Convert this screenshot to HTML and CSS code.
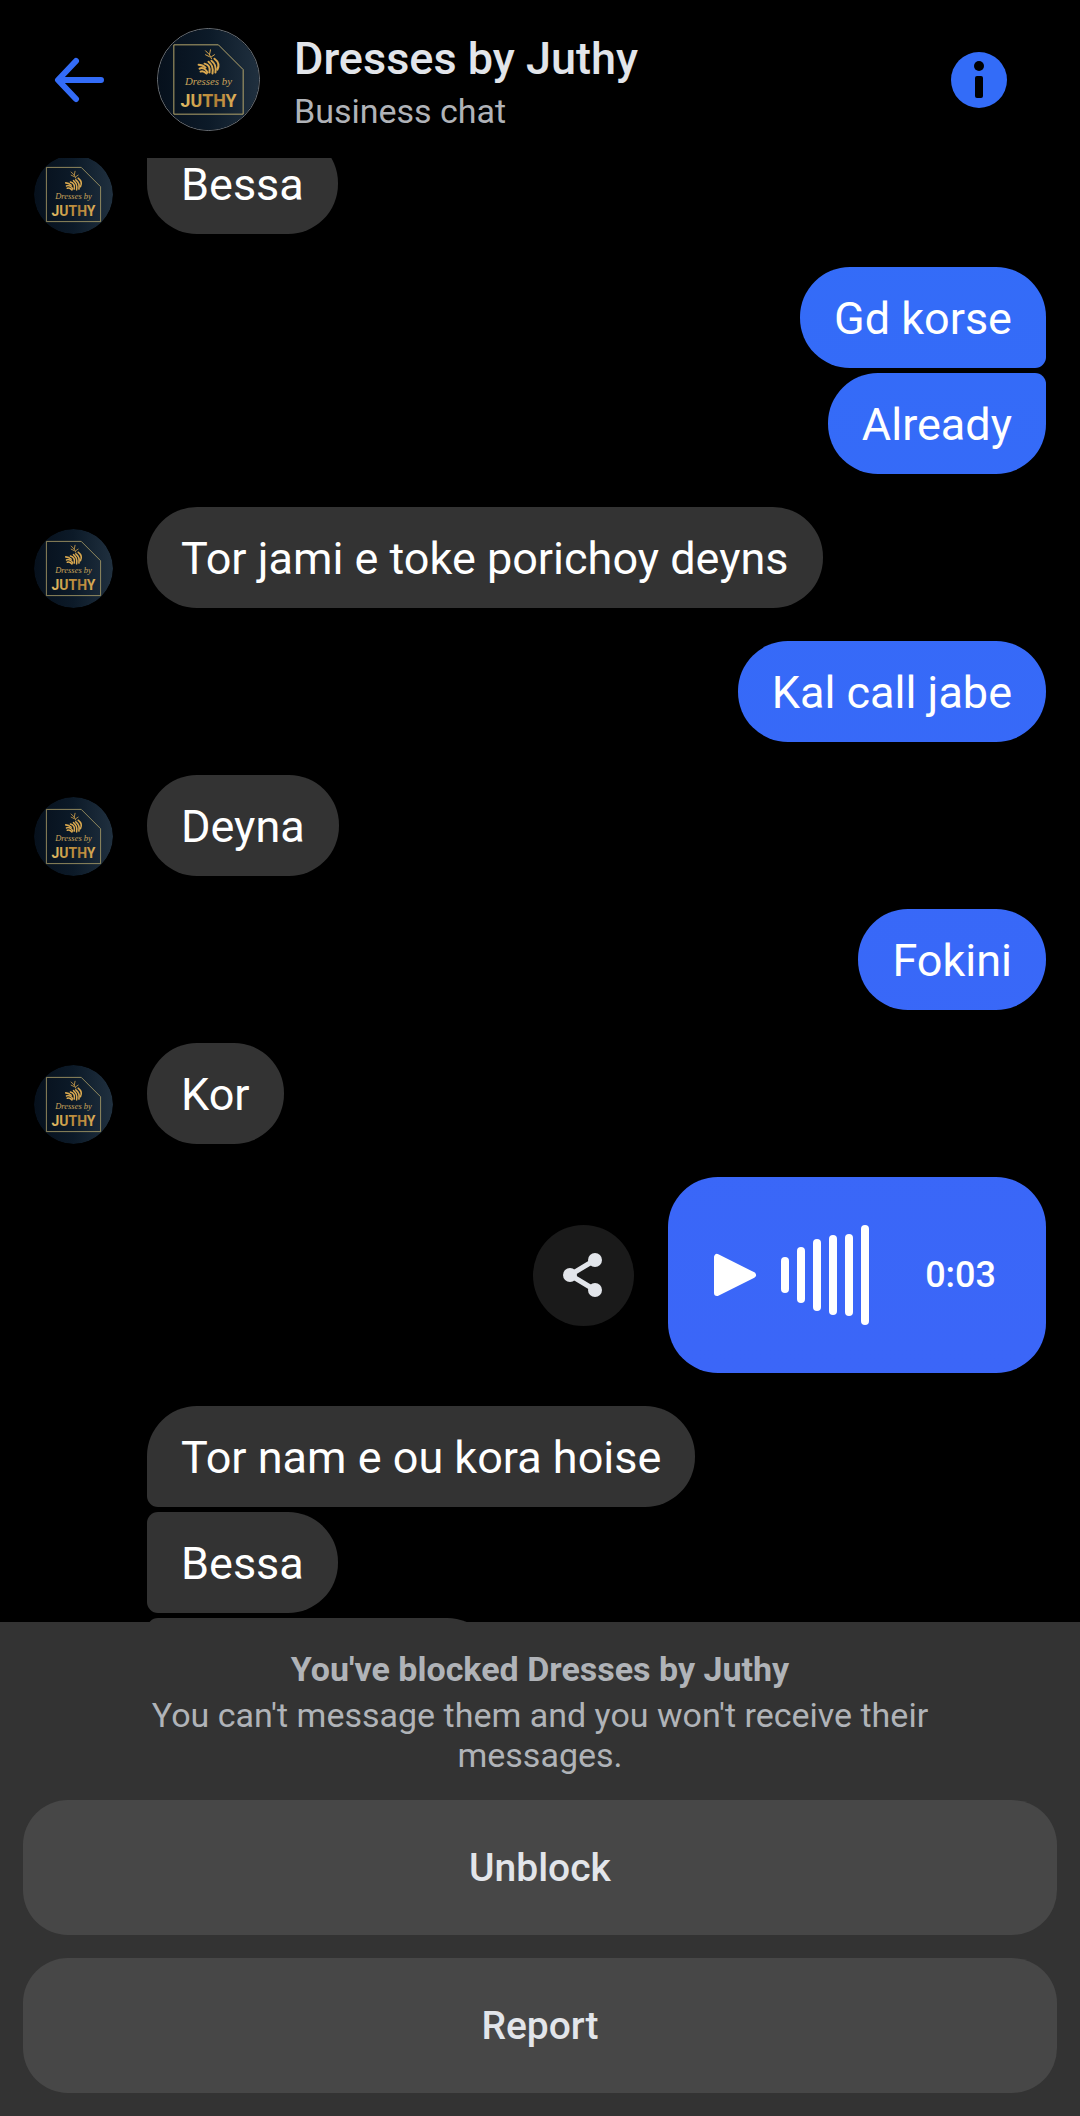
FILE: index.html
```html
<!DOCTYPE html>
<html lang="en">
<head>
    <meta charset="UTF-8">
    <meta name="viewport" content="width=device-width, initial-scale=1.0">
    <title>Dresses by Juthy</title>
    <link rel="stylesheet" href="styles.css">
</head>
<body>
    <header class="topbar">
        <button class="icon-button" aria-label="Back">
            <svg class="back-icon" viewBox="0 0 50 50" fill="none" stroke="#336cf8" stroke-width="6" stroke-linecap="round" stroke-linejoin="round">
                <path d="M47 25H5M22 6L4 25L22 44"/>
            </svg>
        </button>
        <!-- Shop logo, reused by the small avatars in the chat -->
        <svg class="avatar avatar-large" viewBox="0 0 102 102" role="img" aria-label="Dresses by Juthy">
            <defs>
                <linearGradient id="navy" x1="0" y1="0" x2="1" y2="0">
                    <stop offset="0" stop-color="#06101c"/>
                    <stop offset="0.5" stop-color="#0c1a28"/>
                    <stop offset="1" stop-color="#20303f"/>
                </linearGradient>
                <linearGradient id="gold" x1="0" y1="0" x2="1" y2="0">
                    <stop offset="0" stop-color="#e3bd67"/>
                    <stop offset="0.35" stop-color="#c79a44"/>
                    <stop offset="0.65" stop-color="#b07f36"/>
                    <stop offset="1" stop-color="#e0b45c"/>
                </linearGradient>
            </defs>
            <g id="logo">
                <circle cx="51" cy="51" r="51" fill="url(#navy)"/>
                <path d="M16 16H61L86 41V86H16Z" fill="none" stroke="#b5a66c" stroke-width="1"/>
                <g fill="none" stroke="#d9a84f" stroke-linecap="round">
                    <path d="M41 36C44 36 46 37 48 39" stroke-width="2"/>
                    <path d="M42 40C45 38 49 41 50 44" stroke-width="2"/>
                    <path d="M47 35C51 36 53 39 52 44" stroke-width="2"/>
                    <path d="M51 33C55 36 56 40 55 45" stroke-width="2"/>
                    <path d="M54 32C58 35 59 39 58 44" stroke-width="2"/>
                    <path d="M57 30C61 33 62 37 60 41" stroke-width="2"/>
                    <path d="M43 43C45 42 47 43 49 45" stroke-width="2"/>
                    <path d="M54 30L52 26L48 22M52 26L53 21M54 28L57 26M52 28L48 26" stroke-width="1"/>
                </g>
                <text class="logo-script" x="51" y="57" text-anchor="middle">Dresses by</text>
                <text class="logo-name" x="51" y="79" text-anchor="middle" fill="url(#gold)">JUTHY</text>
            </g>
        </svg>
        <div class="contact">
            <h1>Dresses by Juthy</h1>
            <p>Business chat</p>
        </div>
        <button class="icon-button" aria-label="Chat info">
            <svg class="info-icon" viewBox="0 0 56 56">
                <circle cx="28" cy="28" r="28" fill="#336cf8"/>
                <circle cx="28" cy="14" r="5" fill="#000"/>
                <rect x="24" y="24" width="8" height="22" rx="2" fill="#000"/>
            </svg>
        </button>
    </header>

    <main class="chat" id="chat">
        <div class="row received">
            <svg class="avatar" viewBox="0 0 102 102" aria-hidden="true"><use href="#logo"/></svg>
            <div class="stack"><p class="bubble join-top">Bessa</p></div>
        </div>
        <div class="row sent">
            <div class="stack">
                <p class="bubble join-bottom">Gd korse</p>
                <p class="bubble join-top">Already</p>
            </div>
        </div>
        <div class="row received">
            <svg class="avatar" viewBox="0 0 102 102" aria-hidden="true"><use href="#logo"/></svg>
            <div class="stack"><p class="bubble">Tor jami e toke porichoy deyns</p></div>
        </div>
        <div class="row sent">
            <div class="stack"><p class="bubble">Kal call jabe</p></div>
        </div>
        <div class="row received">
            <svg class="avatar" viewBox="0 0 102 102" aria-hidden="true"><use href="#logo"/></svg>
            <div class="stack"><p class="bubble">Deyna</p></div>
        </div>
        <div class="row sent">
            <div class="stack"><p class="bubble">Fokini</p></div>
        </div>
        <div class="row received">
            <svg class="avatar" viewBox="0 0 102 102" aria-hidden="true"><use href="#logo"/></svg>
            <div class="stack"><p class="bubble">Kor</p></div>
        </div>
        <div class="row sent voice-row">
            <button class="share-button" aria-label="Share">
                <svg class="share-icon" viewBox="0 0 44 44" fill="#e2e5ea" stroke="#e2e5ea">
                    <path d="M33 7L8 22L33 37" fill="none" stroke-width="5"/>
                    <circle cx="8" cy="22" r="7" stroke="none"/>
                    <circle cx="33" cy="7" r="7" stroke="none"/>
                    <circle cx="33" cy="37" r="7" stroke="none"/>
                </svg>
            </button>
            <div class="voice">
                <button class="icon-button" aria-label="Play voice message">
                    <svg class="play-icon" viewBox="0 0 44 44" fill="#fff" stroke="#fff" stroke-width="6" stroke-linejoin="round">
                        <path d="M4 4V40L40 22Z"/>
                    </svg>
                </button>
                <div class="wave">
                    <span style="height: 36px"></span>
                    <span style="height: 56px"></span>
                    <span style="height: 72px"></span>
                    <span style="height: 80px"></span>
                    <span style="height: 82px"></span>
                    <span style="height: 100px"></span>
                </div>
                <time class="duration">0:03</time>
            </div>
        </div>
        <div class="row received no-avatar">
            <div class="stack">
                <p class="bubble join-bottom">Tor nam e ou kora hoise</p>
                <p class="bubble join-top join-bottom">Bessa</p>
                <p class="bubble join-top bubble-empty"></p>
            </div>
        </div>
    </main>

    <footer class="blocked">
        <div class="blocked-text">
            <h2>You've blocked Dresses by Juthy</h2>
            <p>You can't message them and you won't receive their messages.</p>
        </div>
        <button class="action">Unblock</button>
        <button class="action">Report</button>
    </footer>

    <script>
        // Open with the older messages slightly scrolled under the header
        document.getElementById('chat').scrollTop = 25;
    </script>
</body>
</html>
```
FILE: styles.css
```css
* {
    box-sizing: border-box;
    margin: 0;
    padding: 0;
}

body {
    height: 100vh;
    display: flex;
    flex-direction: column;
    background: #000;
    color: #fff;
    font-family: Roboto, "Liberation Sans", sans-serif;
}

button {
    font-family: inherit;
    border: none;
    cursor: pointer;
}

svg {
    display: block;
    flex-shrink: 0;
}

.icon-button {
    background: none;
}

/* --- Header --- */
.topbar {
    display: flex;
    align-items: center;
    height: 158px;
    padding: 1px 73px 0 54px;
    flex-shrink: 0;
}

.back-icon {
    width: 50px;
    height: 50px;
}

.info-icon {
    width: 56px;
    height: 56px;
}

.avatar {
    width: 79px;
    height: 79px;
    border-radius: 50%;
}

.avatar-large {
    width: 103px;
    height: 103px;
    margin: 0 34px 0 53px;
    border: 1px solid #6d737a;
}

.logo-script {
    font: italic 11px "Liberation Serif", serif;
    fill: #c9a35a;
}

.logo-name {
    font: bold 18px Roboto, sans-serif;
}

.contact {
    flex: 1;
    padding-top: 4px;
}

.contact h1 {
    font-size: 45px;
    font-weight: 500;
    line-height: 52px;
    color: #e2e5ea;
}

.contact p {
    margin-top: 6px;
    font-size: 34px;
    line-height: 40px;
    color: #b0b3b8;
}

/* --- Messages --- */
.chat {
    flex: 1;
    min-height: 0;
    overflow-y: auto;
    scrollbar-width: none;
    display: flex;
    flex-direction: column;
    gap: 33px;
    padding: 0 34px;
}

.row {
    display: flex;
    align-items: flex-end;
    gap: 34px;
    flex-shrink: 0;
}

.sent {
    justify-content: flex-end;
}

.no-avatar {
    padding-left: 113px;
}

.stack {
    display: flex;
    flex-direction: column;
    align-items: flex-start;
    gap: 5px;
}

.sent .stack {
    align-items: flex-end;
}

.bubble {
    padding: 25px 34px 23px;
    border-radius: 50px;
    background: #333;
    font-size: 45px;
    line-height: 53px;
}

.sent .bubble,
.voice {
    background: linear-gradient(#326df8, #4062f8) fixed;
}

/* Flattened corners where bubbles of one sender meet */
.received .join-top {
    border-top-left-radius: 11px;
}

.received .join-bottom {
    border-bottom-left-radius: 11px;
}

.sent .join-top {
    border-top-right-radius: 11px;
}

.sent .join-bottom {
    border-bottom-right-radius: 11px;
}

.bubble-empty {
    width: 350px;
    height: 101px;
}

/* --- Voice message --- */
.voice-row {
    align-items: center;
}

.share-button {
    display: flex;
    align-items: center;
    justify-content: center;
    width: 101px;
    height: 101px;
    border-radius: 50%;
    background: #1a1a1a;
}

.share-icon {
    width: 44px;
    height: 44px;
    overflow: visible;
}

.voice {
    display: flex;
    align-items: center;
    width: 378px;
    height: 196px;
    padding: 0 50px 0 45px;
    border-radius: 50px;
}

.play-icon {
    width: 44px;
    height: 44px;
}

.wave {
    display: flex;
    align-items: center;
    gap: 8px;
    margin-left: 24px;
}

.wave span {
    width: 8px;
    border-radius: 4px;
    background: #fff;
}

.duration {
    margin-left: auto;
    font-size: 36px;
    font-weight: 500;
}

/* --- Blocked panel --- */
.blocked {
    display: flex;
    flex-direction: column;
    gap: 23px;
    padding: 27px 23px 23px;
    flex-shrink: 0;
    background: #333;
}

.blocked-text {
    padding: 0 100px 2px;
    text-align: center;
    font-size: 34px;
    line-height: 40px;
    color: #b0b3b8;
}

.blocked-text h2 {
    margin-bottom: 6px;
    font-size: 34px;
    font-weight: 700;
}

.action {
    height: 135px;
    border-radius: 45px;
    background: #474747;
    color: #e2e5ea;
    font-size: 39px;
    font-weight: 500;
}
```
